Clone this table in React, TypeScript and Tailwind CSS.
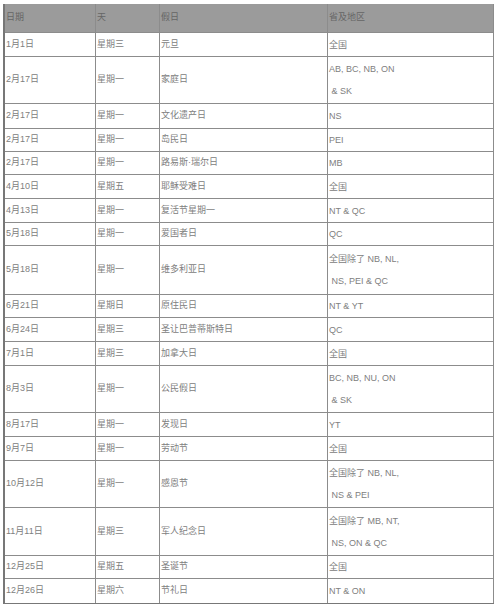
import React from 'react'

type Holiday = {
  date: string
  day: string
  name: string
  regions: string[]
  height: string
}

const holidays: Holiday[] = [
  { date: '1月1日', day: '星期三', name: '元旦', regions: ['全国'], height: 'h-[24px]' },
  { date: '2月17日', day: '星期一', name: '家庭日', regions: ['AB, BC, NB, ON', ' & SK'], height: 'h-[47px]' },
  { date: '2月17日', day: '星期一', name: '文化遗产日', regions: ['NS'], height: 'h-[25px]' },
  { date: '2月17日', day: '星期一', name: '岛民日', regions: ['PEI'], height: 'h-[23px]' },
  { date: '2月17日', day: '星期一', name: '路易斯·瑞尔日', regions: ['MB'], height: 'h-[23px]' },
  { date: '4月10日', day: '星期五', name: '耶稣受难日', regions: ['全国'], height: 'h-[24px]' },
  { date: '4月13日', day: '星期一', name: '复活节星期一', regions: ['NT & QC'], height: 'h-[24px]' },
  { date: '5月18日', day: '星期一', name: '爱国者日', regions: ['QC'], height: 'h-[23px]' },
  { date: '5月18日', day: '星期一', name: '维多利亚日', regions: ['全国除了 NB, NL,', ' NS, PEI & QC'], height: 'h-[49px]' },
  { date: '6月21日', day: '星期日', name: '原住民日', regions: ['NT & YT'], height: 'h-[23px]' },
  { date: '6月24日', day: '星期三', name: '圣让巴普蒂斯特日', regions: ['QC'], height: 'h-[24px]' },
  { date: '7月1日', day: '星期三', name: '加拿大日', regions: ['全国'], height: 'h-[24px]' },
  { date: '8月3日', day: '星期一', name: '公民假日', regions: ['BC, NB, NU, ON', ' & SK'], height: 'h-[47px]' },
  { date: '8月17日', day: '星期一', name: '发现日', regions: ['YT'], height: 'h-[24px]' },
  { date: '9月7日', day: '星期一', name: '劳动节', regions: ['全国'], height: 'h-[24px]' },
  { date: '10月12日', day: '星期一', name: '感恩节', regions: ['全国除了 NB, NL,', ' NS & PEI'], height: 'h-[47px]' },
  { date: '11月11日', day: '星期三', name: '军人纪念日', regions: ['全国除了 MB, NT,', ' NS, ON & QC'], height: 'h-[48px]' },
  { date: '12月25日', day: '星期五', name: '圣诞节', regions: ['全国'], height: 'h-[23px]' },
  { date: '12月26日', day: '星期六', name: '节礼日', regions: ['NT & ON'], height: 'h-[24px]' },
]

const cols = 'grid grid-cols-[91px_64px_168px_166px]'
const cell = 'flex items-center pl-[1px] border-r border-[#8c8c8c]'

export default function App() {
  return (
    <div className="min-h-[607px] bg-white pt-[4px] pl-[3px] font-['Liberation_Sans','Noto_Sans_CJK_SC',sans-serif] text-[9px] text-[#808080]">
      <div className="w-[491px] border-l-2 border-b border-[#777]">
        {/* Header */}
        <div className={`${cols} h-[29px] bg-[#9b9b9b] text-[#666] border-b border-[#8c8c8c]`}>
          <div className={cell}>日期</div>
          <div className={cell}>天</div>
          <div className={cell}>假日</div>
          <div className={cell}>省及地区</div>
        </div>

        {holidays.map((h, i) => (
          <div key={i} className={`${cols} ${h.height} border-b border-[#8c8c8c] last:border-b-0`}>
            <div className={cell}>{h.date}</div>
            <div className={cell}>{h.day}</div>
            <div className={cell}>{h.name}</div>
            <div className={`${cell} flex-col items-start justify-center leading-[22px]`}>
              {h.regions.map((r, j) => (
                <span key={j} className="whitespace-pre">{r}</span>
              ))}
            </div>
          </div>
        ))}
      </div>
    </div>
  )
}
